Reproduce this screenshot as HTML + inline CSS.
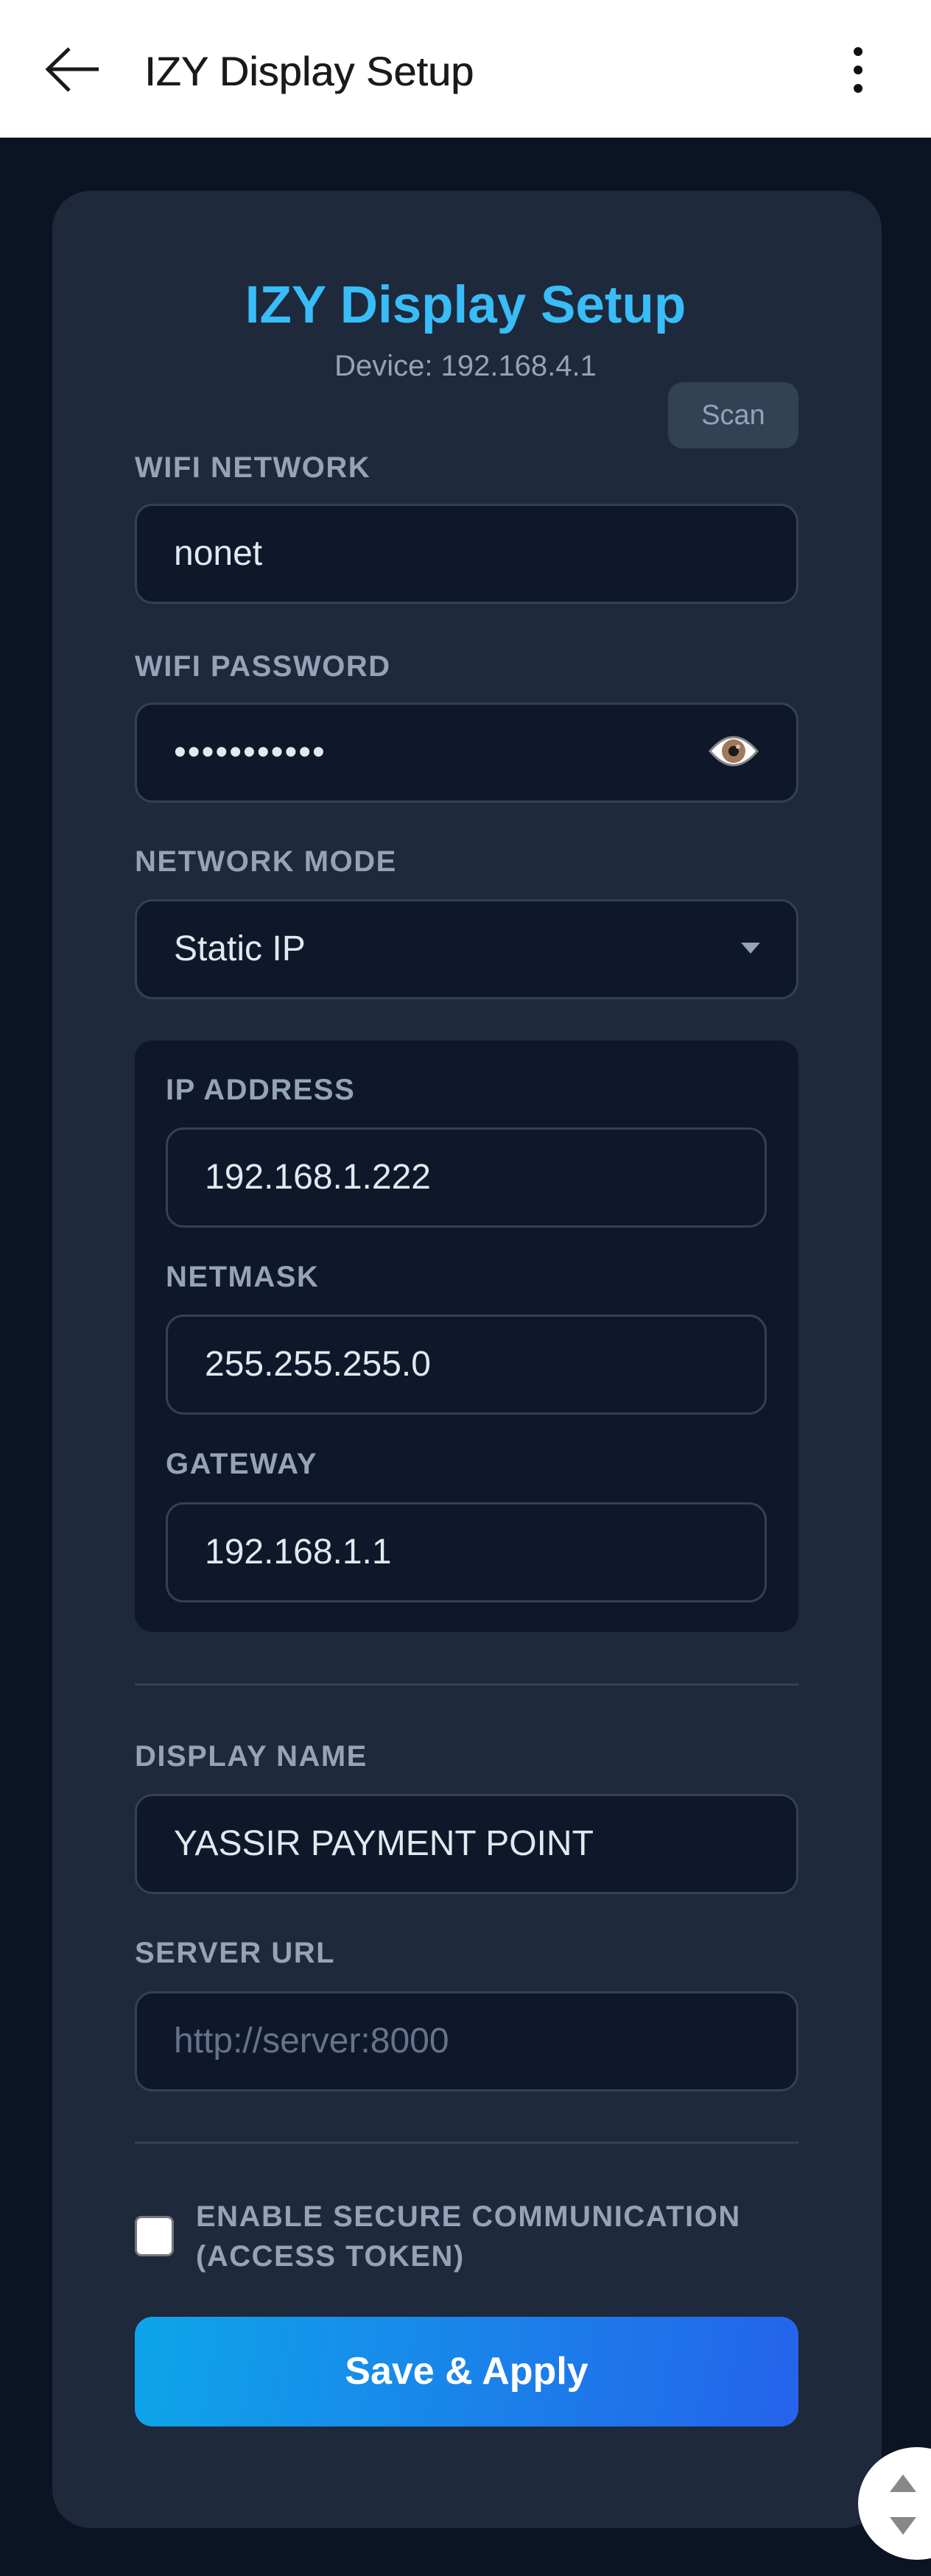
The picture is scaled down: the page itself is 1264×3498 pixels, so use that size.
<!DOCTYPE html>
<html><head><meta charset="utf-8"><style>
*{margin:0;padding:0;box-sizing:border-box}
body{width:1264px;height:3498px;background:#0c1322;font-family:"Liberation Sans",sans-serif;position:relative;overflow:hidden}
.hdr{position:absolute;left:0;top:0;width:1264px;height:187px;background:#fff;border-bottom:1px solid #ddd}
.hdr .t{position:absolute;left:196px;top:62px;font-size:56px;color:#1a1a1a;line-height:70px;text-shadow:0.6px 0 0 #1a1a1a}
.card{position:absolute;left:71px;top:259px;width:1126px;height:3174px;background:#1e293b;border-radius:52px}
.abs{position:absolute}
.title{left:0;width:1264px;text-align:center;top:372px;font-size:71px;font-weight:bold;color:#38bdf8;line-height:86px}
.dev{left:0;width:1264px;text-align:center;top:472px;font-size:40px;color:#94a3b8;line-height:50px}
.scan{left:907px;top:519px;width:177px;height:90px;background:#334155;border-radius:20px;color:#94a3b8;font-size:38px;line-height:90px;text-align:center}
.lbl{font-size:40px;font-weight:bold;color:#94a3b8;letter-spacing:1.5px;line-height:46px}
.inp{background:#0f172a;border:3px solid #334155;border-radius:24px;height:136px;font-size:48px;color:#e2e8f0;line-height:130px;padding-left:50px}
.sub{left:183px;top:1413px;width:901px;height:803px;background:#0f172a;border-radius:24px}
.sub .inp{background:#0f172a}
.hr{left:183px;width:901px;height:3px;background:#334155}
</style></head><body>
<div class="hdr">
<svg class="abs" style="left:58px;top:60px" width="80" height="70" viewBox="0 0 80 70"><path d="M76 34H8M36 6L7 34l29 29" fill="none" stroke="#1a1a1a" stroke-width="5"/></svg>
<div class="t">IZY Display Setup</div>
<svg class="abs" style="left:1150px;top:62px" width="30" height="64"><circle cx="15" cy="8" r="6" fill="#111"/><circle cx="15" cy="33" r="6" fill="#111"/><circle cx="15" cy="58" r="6" fill="#111"/></svg>
</div>
<div class="card"></div>
<div class="abs title">IZY Display Setup</div>
<div class="abs dev">Device: 192.168.4.1</div>
<div class="abs scan">Scan</div>

<div class="abs lbl" style="left:183px;top:612px">WIFI NETWORK</div>
<div class="abs inp" style="left:183px;top:684px;width:901px">nonet</div>

<div class="abs lbl" style="left:183px;top:882px">WIFI PASSWORD</div>
<div class="abs inp" style="left:183px;top:954px;width:901px;letter-spacing:2px">•••••••••••</div>
<svg class="abs" style="left:961px;top:990px" width="70" height="60" viewBox="0 0 70 60"><path d="M3 30Q35 -8 67 30Q35 68 3 30Z" fill="#fff" stroke="#888" stroke-width="3"/><circle cx="35" cy="30" r="16" fill="#a0785a"/><circle cx="35" cy="30" r="7" fill="#1a1a1a"/><circle cx="41" cy="24" r="3" fill="#e0c0a8"/></svg>

<div class="abs lbl" style="left:183px;top:1147px">NETWORK MODE</div>
<div class="abs inp" style="left:183px;top:1221px;width:901px">Static IP</div>
<svg class="abs" style="left:1006px;top:1280px" width="26" height="18"><path d="M0 0H26L13 15Z" fill="#94a3b8"/></svg>

<div class="abs sub"></div>
<div class="abs lbl" style="left:225px;top:1457px">IP ADDRESS</div>
<div class="abs inp" style="left:225px;top:1531px;width:816px">192.168.1.222</div>
<div class="abs lbl" style="left:225px;top:1711px">NETMASK</div>
<div class="abs inp" style="left:225px;top:1785px;width:816px">255.255.255.0</div>
<div class="abs lbl" style="left:225px;top:1965px">GATEWAY</div>
<div class="abs inp" style="left:225px;top:2040px;width:816px">192.168.1.1</div>

<div class="abs hr" style="top:2286px"></div>

<div class="abs lbl" style="left:183px;top:2362px">DISPLAY NAME</div>
<div class="abs inp" style="left:183px;top:2436px;width:901px">YASSIR PAYMENT POINT</div>
<div class="abs lbl" style="left:183px;top:2629px">SERVER URL</div>
<div class="abs inp" style="left:183px;top:2704px;width:901px;color:#64748b">http://server:8000</div>

<div class="abs hr" style="top:2908px"></div>

<div class="abs" style="left:183px;top:3009px;width:53px;height:55px;background:#fff;border:3px solid #777;border-radius:9px"></div>
<div class="abs lbl" style="left:266px;top:2983px;line-height:54px">ENABLE SECURE COMMUNICATION<br>(ACCESS TOKEN)</div>

<div class="abs" style="left:183px;top:3146px;width:901px;height:149px;border-radius:24px;background:linear-gradient(100deg,#0ea5e9,#2563eb);color:#fff;font-size:52px;font-weight:bold;text-align:center;line-height:149px">Save &amp; Apply</div>

<div class="abs" style="left:1165px;top:3323px;width:160px;height:153px;border-radius:50%;background:#fff"></div>
<svg class="abs" style="left:1208px;top:3358px" width="36" height="90"><path d="M0 26H36L18 2Z" fill="#888"/><path d="M0 60H36L18 84Z" fill="#888"/></svg>
</body></html>
